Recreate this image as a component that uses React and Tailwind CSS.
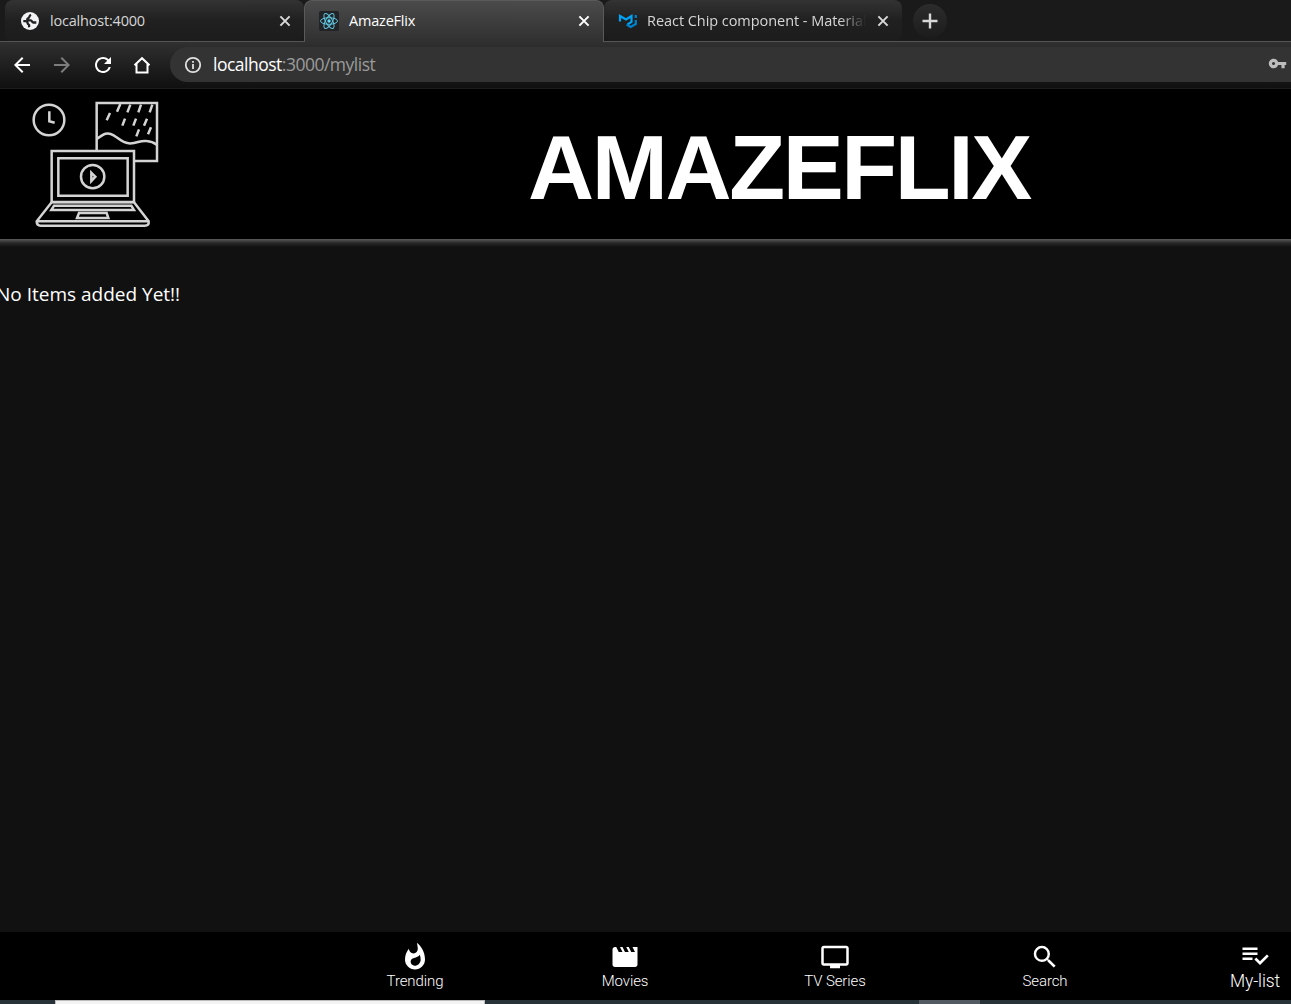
import React from "react";
import { MdArrowBack, MdArrowForward, MdRefresh, MdVpnKey, MdSearch } from "react-icons/md";

function Globe() {
  return (
    <svg viewBox="0 0 20 20" className="h-5 w-5 shrink-0">
      <circle cx="10" cy="10" r="9" fill="#f1f3f4" />
      <path d="M11.500 3C9.500 3.200 8.600 4.500 9.600 5.500c.7.900-.6 1.600-1.800 1.900-1 .4-.6 1.600.4 1.800h3.200c1.300.2 1.100 1.800 2.400 1.900 1.200.2 2.200.1 3.200-.6-.3 2.900-2.400 5.600-5.600 6.300-1.300-.2-.9-1.400-.2-2 .7-.8.2-1.600-.8-1.800-1.500-.3-1-2.100-2.400-2.600-1.600-.5-3.200-.5-4.800-.5C3.200 7 5.700 3.900 9 3.200z" fill="none" />
      <path d="M11 3.700C8.300 5 10.500 6.400 8 7.400c-1.500.8-.5 2 .8 2h2c1.300.1 1 1.900 2.700 2.100h2.800M3.300 10.200h2.200c1.800 0 2 1 2.200 2.200.2 1.100 1.700 1 1.500 2.300-.1.700-.2 1-.1 1.600" fill="none" stroke="#222" strokeWidth="2.300" />
    </svg>
  );
}

function ReactLogo() {
  return (
    <svg viewBox="0 0 20 20" className="h-5 w-5 shrink-0">
      <rect width="20" height="20" rx="2" fill="#222326" />
      <g fill="none" stroke="#61c8e0" strokeWidth="1">
        <ellipse cx="10" cy="10" rx="8.500" ry="3.300" />
        <ellipse cx="10" cy="10" rx="8.500" ry="3.300" transform="rotate(60 10 10)" />
        <ellipse cx="10" cy="10" rx="8.500" ry="3.300" transform="rotate(120 10 10)" />
      </g>
      <circle cx="10" cy="10" r="1.700" fill="#61dafb" />
    </svg>
  );
}

function MuiLogo() {
  return (
    <svg viewBox="0 0 20 20" className="h-5 w-5 shrink-0" fill="none" strokeWidth="2.200">
      <path d="M2 10.500V5l6 3.500L13.500 5v6l-4 2.500" stroke="#00a3f5" />
      <path d="M8.600 13.500l4 2.500 5.200-3V9M17.800 4v3" stroke="#0081cb" />
    </svg>
  );
}

function Close({ bright }) {
  return (
    <svg viewBox="0 0 12 12" className="h-3 w-3 shrink-0" fill="none" stroke={bright ? "#ffffff" : "#d8d8d8"} strokeWidth="2">
      <path d="M1.400 1.400l9.200 9.200M10.600 1.400l-9.200 9.200" />
    </svg>
  );
}

function Tab({ icon, title, active, fade }) {
  return (
    <div
      className={
        active
          ? "flex h-[42px] w-[300px] shrink-0 items-center rounded-t-lg border-x border-t border-[#5a5a5a] bg-linear-to-b from-[#4b4b4b] to-[#303030] pl-[14px] pr-[13px] pb-px"
          : fade
            ? "flex h-[41px] w-[298px] shrink-0 items-center rounded-lg bg-linear-to-b from-[#333333] via-[#202020] to-[#1c1c1c] pl-[14px] pr-[13px]"
            : "flex h-[41px] w-[299px] shrink-0 items-center rounded-lg bg-linear-to-b from-[#333333] via-[#202020] to-[#1c1c1c] pl-[15px] pr-[13px]"
      }
    >
      {icon}
      <div
        className={
          fade
            ? "ml-[9px] w-[219px] overflow-hidden whitespace-nowrap text-[14.500px] leading-5 tracking-[-0.050px] text-[#d6d6d6] [mask-image:linear-gradient(to_right,black_88%,transparent)]"
            : active
              ? "ml-[10px] flex-1 whitespace-nowrap text-[14.500px] leading-5 tracking-[-0.200px] text-white"
              : "ml-[10px] flex-1 whitespace-nowrap text-[14.500px] leading-5 tracking-[-0.200px] text-[#d6d6d6]"
        }
      >
        {title}
      </div>
      <span className="ml-auto flex"><Close bright={active} /></span>
    </div>
  );
}

function HeaderArt() {
  return (
    <svg viewBox="0 0 450 480" className="ml-5 mt-px h-[160px] w-[150px] shrink-0 self-start" fill="none" stroke="#d4d4d4" strokeWidth="7.500">
      <circle cx="87" cy="90" r="46" />
      <path d="M88 64v30l16 4" />
      <path d="M230 181V39h181v174h-67" />
      <path d="M230 147c20-14 31-23 51-11 18 11 25 22 45 24 25 2 32-10 54-7 15 1 22 5 30 11" />
      <path d="M301 42l-10 23M331 44l-9 23M363 44l-8 23M397 44l-8 23M270 69l-10 22M315 86l-8 21M348 86l-8 21M381 86l-9 21M357 118l-8 21M393 112l-9 21" />
      <path d="M95 336V183h247v153z" />
      <path d="M115 205h208v112H115z" />
      <circle cx="218" cy="260" r="35" />
      <path d="M214 248v25l12-13z" />
      <path d="M95 337L50 394q0 13 12 13h312q14 0 12-13l-44-57zM50 394h336M102 347h232l8 13H94zM177 369h83l5 15H171z" />
    </svg>
  );
}

const shapes = {
  hot: "M13.5.67s.74 2.65.74 4.8c0 2.06-1.35 3.73-3.41 3.73-2.07 0-3.63-1.67-3.63-3.73l.03-.36C5.21 7.51 4 10.62 4 14c0 4.42 3.58 8 8 8s8-3.58 8-8C20 8.61 17.41 3.8 13.5.67zM11.71 19c-1.78 0-3.22-1.4-3.22-3.14 0-1.62 1.05-2.76 2.81-3.12 1.77-.36 3.6-1.21 4.62-2.58.39 1.29.59 2.65.59 4.04 0 2.65-2.15 4.8-4.8 4.8z",
  movie: "M18 4l2 4h-3l-2-4h-2l2 4h-3l-2-4H8l2 4H7L5 4H4c-1.1 0-1.99.9-1.99 2L2 18c0 1.1.9 2 2 2h16c1.1 0 2-.9 2-2V4h-4z",
  tv: "M21 3H3c-1.1 0-2 .9-2 2v12c0 1.1.9 2 2 2h5v2h8v-2h5c1.1 0 1.99-.9 1.99-2L23 5c0-1.1-.9-2-2-2zm0 14H3V5h18v12z",
  list: "M14 10H2v2h12v-2zm0-4H2v2h12V6zM2 16h8v-2H2v2zm19.5-4.500L23 13l-6.990 7-4.510-4.500L13 14l3.010 3 5.490-5.500z",
};

function Shape({ name }) {
  return (
    <svg viewBox="0 0 24 24" className="h-[30px] w-[30px]" fill="currentColor">
      <path d={shapes[name]} />
    </svg>
  );
}

function NavItem({ icon, label, selected }) {
  return (
    <button className={selected ? "flex w-[210px] shrink-0 flex-col items-center pt-[8px]" : "flex w-[210px] shrink-0 flex-col items-center pt-[10px]"}>
      {icon}
      <span className={selected ? "text-[17.500px] leading-[22px] font-light tracking-[-0.100px]" : "text-[15px] leading-[18px] font-light tracking-[-0.100px]"}>{label}</span>
    </button>
  );
}

export default function App() {
  return (
    <div className="flex h-[1004px] w-[1291px] flex-col overflow-hidden bg-[#111111] font-['Open_Sans','Noto_Sans',sans-serif] text-white">
      <div className="flex h-[42px] shrink-0 border-b border-[#555555] bg-[#1a1a1a] pl-[5px]">
        <Tab icon={<Globe />} title="localhost:4000" />
        <Tab active icon={<ReactLogo />} title="AmazeFlix" />
        <Tab fade icon={<MuiLogo />} title="React Chip component - Material-UI" />
        <div className="ml-[11px] mt-1 flex h-[34px] w-[34px] items-center justify-center rounded-full bg-linear-to-b from-[#2c2c2c] to-[#1c1c1c]">
          <svg viewBox="0 0 16 16" className="h-4 w-4" stroke="#d8d8d8" strokeWidth="2.400">
            <path d="M8 .5v15M.5 8h15" />
          </svg>
        </div>
      </div>

      <div className="flex h-[47px] shrink-0 items-center border-b border-[#1c1c1c] bg-linear-to-b from-[#303030] to-[#101010] pb-px">
        <MdArrowBack className="ml-[10px] h-6 w-6 shrink-0" />
        <MdArrowForward className="ml-4 h-6 w-6 shrink-0 text-[#7d7d7d]" />
        <MdRefresh className="ml-[16.500px] h-6 w-6 shrink-0" />
        <svg viewBox="0 0 24 24" className="ml-[15.500px] h-6 w-6 shrink-0" fill="none" stroke="currentColor" strokeWidth="2">
          <path d="M4.500 12.300L12 5.200l7.500 7.100M6.500 11v8.500h11V11" />
        </svg>
        <div className="ml-4 flex h-[35px] flex-1 items-center rounded-l-full bg-[#333333] pl-[14px] pr-1">
          <svg viewBox="0 0 18 18" className="h-[18px] w-[18px] shrink-0" fill="none" stroke="#e0e0e0" strokeWidth="1.800">
            <circle cx="9" cy="9" r="7.200" />
            <path d="M9 8v5M9 5v1.800" />
          </svg>
          <span className="ml-[11px] pb-0.5 text-[17.500px] leading-6 tracking-[-0.500px] text-white">
            localhost<span className="text-[#9b9b9b]">:3000/mylist</span>
          </span>
          <MdVpnKey className="ml-auto mb-0.5 h-[19px] w-[19px] text-[#bdbdbd]" />
        </div>
      </div>

      <header className="flex h-[150px] shrink-0 bg-black">
        <HeaderArt />
        <h1 className="ml-[358px] mt-[28px] font-['Liberation_Sans',Arial,sans-serif] text-[91.500px] leading-[100px] font-bold tracking-[-2.400px]">AMAZEFLIX</h1>
      </header>
      <div className="h-[8px] shrink-0 bg-linear-to-b from-[#5a5a5a] via-[#292929] to-[#111111]" />

      <main className="flex-1 pt-[33px]">
        <p className="-ml-[4px] whitespace-nowrap text-[19px] leading-7">No Items added Yet!!</p>
      </main>

      <nav className="flex h-[68px] shrink-0 overflow-hidden bg-black pl-[310px] font-['Roboto',sans-serif]">
        <NavItem icon={<Shape name="hot" />} label="Trending" />
        <NavItem icon={<Shape name="movie" />} label="Movies" />
        <NavItem icon={<Shape name="tv" />} label="TV Series" />
        <NavItem icon={<MdSearch className="h-[30px] w-[30px]" />} label="Search" />
        <NavItem selected icon={<Shape name="list" />} label="My-list" />
      </nav>
      <div className="flex h-1 shrink-0 bg-[#263238]">
        <div className="ml-[55px] w-[430px] border-x border-t border-[#bbbbbb] bg-[#f3f3f3]" />
        <div className="ml-[434px] w-[61px] bg-[#535a61]" />
      </div>
    </div>
  );
}
